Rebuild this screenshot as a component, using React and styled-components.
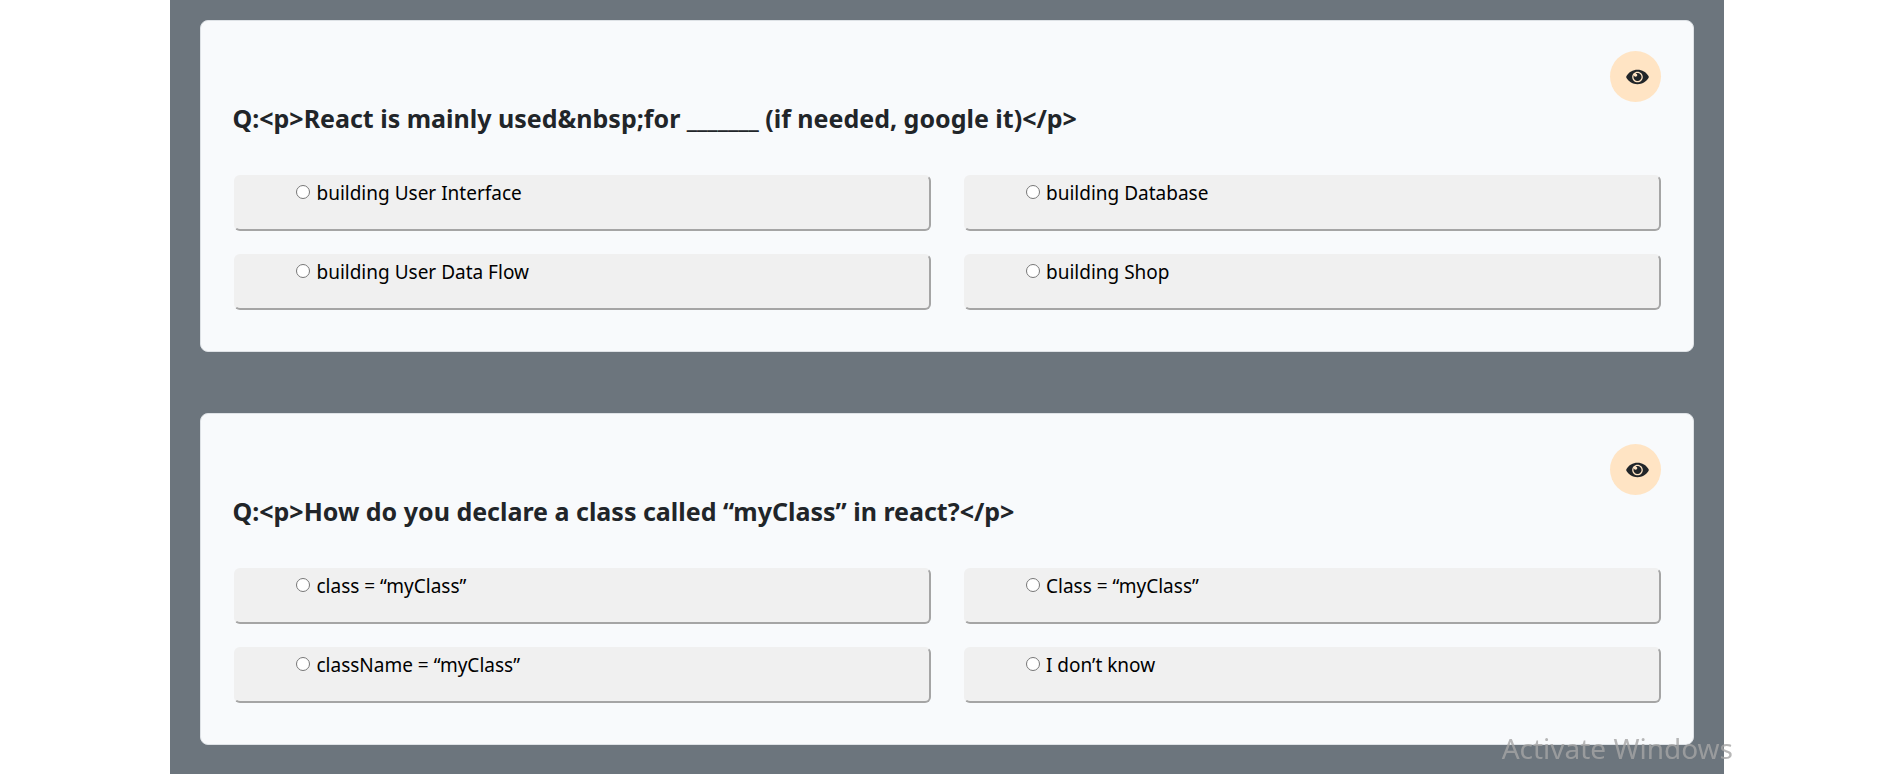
import React, { useState } from "react";
import styled, { createGlobalStyle } from "styled-components";

const GlobalStyle = createGlobalStyle`
  *, *::before, *::after { box-sizing: border-box; }
  body {
    margin: 0;
    background: #fff;
    color: #212529;
    font-family: "Segoe UI", "Noto Sans", "Open Sans", sans-serif;
  }
`;

const Quiz = styled.main`
  display: flex;
  flex-direction: column;
  gap: 61px;
  width: 82%;
  min-height: 100vh;
  margin: 0 auto;
  padding: 20px 30px 29px;
  background: #6c757d;
`;

const Card = styled.section`
  display: flex;
  flex-direction: column;
  padding: 30px 32px 41px 31px;
  background: #f8fafc;
  border: 1px solid #dee2e6;
  border-radius: 8px;
`;

const RevealButton = styled.button`
  display: flex;
  align-items: center;
  justify-content: center;
  align-self: flex-end;
  width: 51px;
  height: 51px;
  padding: 0 0 0 4px;
  border: 0;
  border-radius: 50%;
  background: #ffe4c4;
  color: #212529;
  cursor: pointer;
`;

const EyeSvg = styled.svg`
  width: 23px;
  height: 20px;
  fill: currentColor;
`;

const Question = styled.h2`
  margin: 0 0 40px;
  font-size: 25px;
  font-weight: 700;
  line-height: 33px;
`;

const Options = styled.div`
  display: grid;
  grid-template-columns: 1fr 1fr;
  gap: 23px 33px;
  padding-left: 2px;
`;

const Option = styled.label`
  display: flex;
  align-items: flex-start;
  gap: 6px;
  height: 56px;
  padding: 3px 8px 0 60px;
  border: 2px solid transparent;
  border-right-color: #a5a5a5;
  border-bottom-color: #a5a5a5;
  border-radius: 6px;
  background: #f0f0f0;
  color: #000;
  font-size: 19px;
  line-height: 27px;
  cursor: pointer;
`;

const Radio = styled.input`
  width: 14px;
  height: 14px;
  margin: 5px 0 0;
`;

const Watermark = styled.div`
  position: fixed;
  right: 161px;
  bottom: 6px;
  color: rgba(165, 165, 165, 0.8);
  font-size: 28px;
  line-height: 40px;
  pointer-events: none;
`;

const questions = [
  {
    id: "q1",
    text: "<p>React is mainly used&nbsp;for _______ (if needed, google it)</p>",
    options: ["building User Interface", "building Database", "building User Data Flow", "building Shop"],
  },
  {
    id: "q2",
    text: "<p>How do you declare a class called “myClass” in react?</p>",
    options: ["class = “myClass”", "Class = “myClass”", "className = “myClass”", "I don’t know"],
  },
];

function EyeIcon() {
  return (
    <EyeSvg viewBox="0 0 576 512" aria-hidden="true">
      <path d="M569.354 231.631C512.969 135.949 407.81 72 288 72 168.14 72 63.004 135.994 6.646 231.631a47.999 47.999 0 0 0 0 48.739C63.031 376.051 168.19 440 288 440c119.86 0 224.996-63.994 281.354-159.631a47.997 47.997 0 0 0 0-48.738zM288 392c-75.162 0-136-60.827-136-136 0-75.162 60.826-136 136-136 75.162 0 136 60.826 136 136 0 75.162-60.826 136-136 136zm104-136c0 57.438-46.562 104-104 104s-104-46.562-104-104c0-17.708 4.431-34.379 12.236-48.973l-.001.032c0 23.651 19.173 42.823 42.824 42.823s42.824-19.173 42.824-42.823c0-23.651-19.173-42.824-42.824-42.824l-.032.001C253.621 156.431 270.292 152 288 152c57.438 0 104 46.562 104 104z" />
    </EyeSvg>
  );
}

export default function App() {
  const [answers, setAnswers] = useState({});
  return (
    <>
      <GlobalStyle />
      <Quiz>
        {questions.map((q) => (
          <Card key={q.id}>
            <RevealButton type="button" aria-label="Show answer">
              <EyeIcon />
            </RevealButton>
            <Question>{"Q:" + q.text}</Question>
            <Options>
              {q.options.map((option) => (
                <Option key={option}>
                  <Radio
                    type="radio"
                    name={q.id}
                    checked={answers[q.id] === option}
                    onChange={() => setAnswers({ ...answers, [q.id]: option })}
                  />
                  <span>{option}</span>
                </Option>
              ))}
            </Options>
          </Card>
        ))}
      </Quiz>
      <Watermark>Activate Windows</Watermark>
    </>
  );
}
